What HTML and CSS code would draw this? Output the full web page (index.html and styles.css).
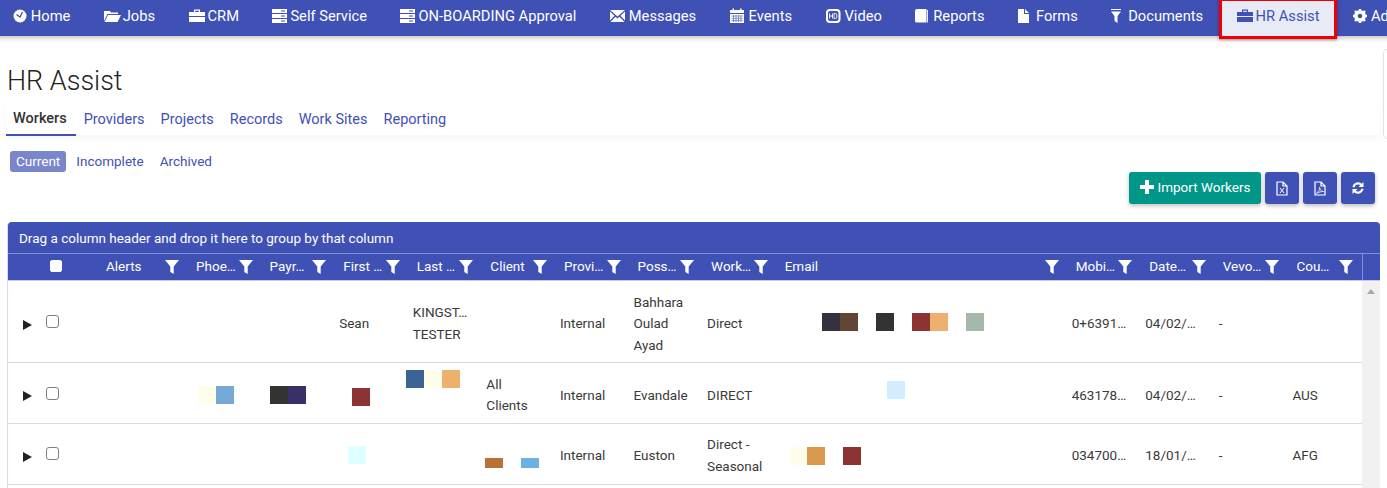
FILE: index.html
```html
<!DOCTYPE html>
<html lang="en">
<head>
<meta charset="utf-8">
<title>HR Assist</title>
<link rel="stylesheet" href="styles.css">
</head>
<body>
<nav class="nav">
  <a class="nav-item"><svg width="18" height="16" viewBox="0 0 18 16"><circle cx="7" cy="8" r="6.500" fill="#fff"/><path d="M3.500 6.500l3.500 2.500 2.500-5" fill="none" stroke="#3f51b5" stroke-width="1.300"/></svg>Home</a>
  <a class="nav-item"><svg width="19" height="16" viewBox="0 0 19 16"><path d="M0 3h6l1 1.500h7V6H3.500L0 13zM4 7h13l-3.500 7H0.500z" fill="#fff"/></svg>Jobs</a>
  <a class="nav-item"><svg width="19" height="16" viewBox="0 0 19 16"><path d="M5 4V1.500h6V4H9.800V2.700H6.200V4zM0 4h16v4H0zM0 9h16v5H0z" fill="#fff"/></svg>CRM</a>
  <a class="nav-item"><svg width="18" height="16" viewBox="0 0 18 16"><path d="M0 1h15v4H0zM0 6h15v4H0zM0 11h15v4H0z" fill="#fff"/><path d="M9 3h4M9 8h4M9 13h4" stroke="#3f51b5"/></svg>Self Service</a>
  <a class="nav-item"><svg width="18" height="16" viewBox="0 0 18 16"><path d="M0 1h15v4H0zM0 6h15v4H0zM0 11h15v4H0z" fill="#fff"/><path d="M9 3h4M9 8h4M9 13h4" stroke="#3f51b5"/></svg>ON-BOARDING Approval</a>
  <a class="nav-item"><svg width="19" height="16" viewBox="0 0 19 16"><path d="M0 2h15L7.500 8.500zM0 3.500l4.500 4.300L0 12.500zM15 3.500v9l-4.500-4.700zM5.500 8.800l2 1.800 2-1.800 5 5.200H.5z" fill="#fff"/></svg>Messages</a>
  <a class="nav-item"><svg width="19" height="16" viewBox="0 0 19 16"><path d="M0 2h2.500V0.500H4V2h6V0.500h1.500V2H14v3H0z" fill="#fff"/><path d="M0 6h14v9H0z" fill="#fff"/><path d="M1.500 8h11M1.500 10.300h11M1.500 12.600h11M3.500 7v7M6 7v7M8.500 7v7M11 7v7" stroke="#5c6bc0" stroke-width=".7"/></svg>Events</a>
  <a class="nav-item"><svg width="19" height="16" viewBox="0 0 19 16"><rect x="1" y="2" width="12.500" height="12" rx="3" fill="#3f51b5" stroke="#fff" stroke-width="2"/><path d="M3.500 5.500v5M6.500 5.500v5M3.500 8h3M8 5.500v5h1.500a1.500 2.500 0 0 0 0-5z" fill="none" stroke="#fff" stroke-width=".9"/></svg>Video</a>
  <a class="nav-item"><svg width="18" height="16" viewBox="0 0 18 16"><path d="M0 3Q0 1 2 1h9.500v13.500H2q-2 0-2-1.500z" fill="#fff"/><path d="M12.500 2v12.500" stroke="#fff" stroke-width=".9"/></svg>Reports</a>
  <a class="nav-item"><svg width="18" height="16" viewBox="0 0 18 16"><path d="M0 1h6v5h5v9H0zM7 1l4 4H7z" fill="#fff"/></svg>Forms</a>
  <a class="nav-item"><svg width="17" height="16" viewBox="0 0 17 16"><path d="M0 1h10v1H0zM0 3.500h10L6.500 8v7L3.500 13V8z" fill="#fff"/></svg>Documents</a>
  <a class="nav-item active"><svg width="19" height="16" viewBox="0 0 19 16"><path d="M5 4V1.500h6V4H9.800V2.700H6.200V4zM0 4h16v4H0zM0 9h16v5H0z" fill="#3f51b5"/></svg>HR Assist</a>
  <a class="nav-item"><svg width="18" height="16" viewBox="0 0 18 16"><circle cx="7" cy="8" r="4.500" fill="none" stroke="#fff" stroke-width="3"/><path d="M7 1v14M0 8h14M2 3l10 10M12 3L2 13" stroke="#fff" stroke-width="2.400"/><circle cx="7" cy="8" r="2.300" fill="#3f51b5"/></svg>Admin</a>
</nav>

<main class="page">
  <h1 class="title">HR Assist</h1>
  <div class="side-tab"></div>
  <div class="tabs">
    <a class="tab current">Workers</a>
    <a class="tab">Providers</a>
    <a class="tab">Projects</a>
    <a class="tab">Records</a>
    <a class="tab">Work Sites</a>
    <a class="tab">Reporting</a>
  </div>
  <div class="pills">
    <a class="pill on">Current</a>
    <a class="pill">Incomplete</a>
    <a class="pill">Archived</a>
  </div>
  <div class="actions">
    <button class="btn teal"><svg width="14" height="14" viewBox="0 0 14 14"><path d="M5 0h4v5h5v4H9v5H5V9H0V5h5z" fill="#fff"/></svg>Import Workers</button>
    <button class="btn icon"><svg width="12" height="15" viewBox="0 0 12 15"><path d="M1 1h6l4 4v9H1zM7 1v4h4" fill="none" stroke="#fff" stroke-width="1.200"/><path d="M4 7l4 5M8 7l-4 5" stroke="#fff"/></svg></button>
    <button class="btn icon"><svg width="12" height="15" viewBox="0 0 12 15"><path d="M1 1h6l4 4v9H1zM7 1v4h4" fill="none" stroke="#fff" stroke-width="1.200"/><path d="M2.500 12.500C5 10 6 8 5.500 6.500 7 10 8 10.500 9.500 10.500 7 10.500 5 11 2.500 12.500z" fill="none" stroke="#fff" stroke-width=".8"/></svg></button>
    <button class="btn icon"><svg width="12" height="12" viewBox="0 0 12 12"><path d="M1.500 5.200A4.600 4.600 0 0 1 9.500 3M10.500 6.800A4.600 4.600 0 0 1 2.500 9" fill="none" stroke="#fff" stroke-width="2"/><path d="M11.500 0v5h-5zM.5 12V7h5z" fill="#fff"/></svg></button>
  </div>

  <section class="grid">
    <div class="group-bar">Drag a column header and drop it here to group by that column</div>
    <div class="row head">
      <div></div>
      <div class="hcheck"><input type="checkbox" class="check white"></div>
      <div class="hcell alerts">Alerts<svg class="funnel" viewBox="0 0 14 14"><path d="M0 0h14L8.700 6.500V14L5.300 12V6.500z"/></svg></div>
      <div class="hcell">Phoe…<svg class="funnel" viewBox="0 0 14 14"><path d="M0 0h14L8.700 6.500V14L5.300 12V6.500z"/></svg></div>
      <div class="hcell">Payr…<svg class="funnel" viewBox="0 0 14 14"><path d="M0 0h14L8.700 6.500V14L5.300 12V6.500z"/></svg></div>
      <div class="hcell">First …<svg class="funnel" viewBox="0 0 14 14"><path d="M0 0h14L8.700 6.500V14L5.300 12V6.500z"/></svg></div>
      <div class="hcell">Last …<svg class="funnel" viewBox="0 0 14 14"><path d="M0 0h14L8.700 6.500V14L5.300 12V6.500z"/></svg></div>
      <div class="hcell">Client<svg class="funnel" viewBox="0 0 14 14"><path d="M0 0h14L8.700 6.500V14L5.300 12V6.500z"/></svg></div>
      <div class="hcell">Provi…<svg class="funnel" viewBox="0 0 14 14"><path d="M0 0h14L8.700 6.500V14L5.300 12V6.500z"/></svg></div>
      <div class="hcell">Poss…<svg class="funnel" viewBox="0 0 14 14"><path d="M0 0h14L8.700 6.500V14L5.300 12V6.500z"/></svg></div>
      <div class="hcell">Work…<svg class="funnel" viewBox="0 0 14 14"><path d="M0 0h14L8.700 6.500V14L5.300 12V6.500z"/></svg></div>
      <div class="hcell">Email<svg class="funnel" viewBox="0 0 14 14"><path d="M0 0h14L8.700 6.500V14L5.300 12V6.500z"/></svg></div>
      <div class="hcell">Mobi…<svg class="funnel" viewBox="0 0 14 14"><path d="M0 0h14L8.700 6.500V14L5.300 12V6.500z"/></svg></div>
      <div class="hcell">Date…<svg class="funnel" viewBox="0 0 14 14"><path d="M0 0h14L8.700 6.500V14L5.300 12V6.500z"/></svg></div>
      <div class="hcell">Vevo…<svg class="funnel" viewBox="0 0 14 14"><path d="M0 0h14L8.700 6.500V14L5.300 12V6.500z"/></svg></div>
      <div class="hcell">Cou…<svg class="funnel" viewBox="0 0 14 14"><path d="M0 0h14L8.700 6.500V14L5.300 12V6.500z"/></svg></div>
      <div class="hend"></div>
    </div>

    <div class="body">
      <div class="rows">
        <div class="row">
          <div class="cell expand"><span class="arrow"></span></div>
          <div class="cell checkcell"><input type="checkbox" class="check"></div>
          <div class="cell"></div>
          <div class="cell"></div>
          <div class="cell"></div>
          <div class="cell">Sean</div>
          <div class="cell">KINGST…<br>TESTER</div>
          <div class="cell"></div>
          <div class="cell">Internal</div>
          <div class="cell">Bahhara<br>Oulad<br>Ayad</div>
          <div class="cell">Direct</div>
          <div class="cell blocks"><div class="swatches r1-email"><i class="sw navy"></i><i class="sw brown"></i><i class="sw dark sp"></i><i class="sw red sp"></i><i class="sw peach"></i><i class="sw sage sp"></i></div></div>
          <div class="cell">0+6391…</div>
          <div class="cell">04/02/…</div>
          <div class="cell">-</div>
          <div class="cell"></div>
        </div>
        <div class="row">
          <div class="cell expand"><span class="arrow"></span></div>
          <div class="cell checkcell"><input type="checkbox" class="check"></div>
          <div class="cell"></div>
          <div class="cell blocks"><div class="swatches r2-phone"><i class="sw cream"></i><i class="sw sky"></i></div></div>
          <div class="cell blocks"><div class="swatches r2-payroll"><i class="sw dark"></i><i class="sw indigo"></i></div></div>
          <div class="cell blocks"><div class="swatches r2-first"><i class="sw red"></i></div></div>
          <div class="cell blocks"><div class="swatches r2-last"><i class="sw steel"></i><i class="sw cream"></i><i class="sw peach"></i></div></div>
          <div class="cell">All<br>Clients</div>
          <div class="cell">Internal</div>
          <div class="cell">Evandale</div>
          <div class="cell">DIRECT</div>
          <div class="cell blocks"><div class="swatches r2-email"><i class="sw ice"></i></div></div>
          <div class="cell">463178…</div>
          <div class="cell">04/02/…</div>
          <div class="cell">-</div>
          <div class="cell">AUS</div>
        </div>
        <div class="row">
          <div class="cell expand"><span class="arrow"></span></div>
          <div class="cell checkcell"><input type="checkbox" class="check"></div>
          <div class="cell"></div>
          <div class="cell"></div>
          <div class="cell"></div>
          <div class="cell blocks"><div class="swatches r3-first"><i class="sw aqua"></i></div></div>
          <div class="cell"></div>
          <div class="cell blocks"><div class="swatches r3-client"><i class="sw short rust"></i><i class="sw short blue sp"></i></div></div>
          <div class="cell">Internal</div>
          <div class="cell">Euston</div>
          <div class="cell">Direct -<br>Seasonal</div>
          <div class="cell blocks"><div class="swatches r3-email"><i class="sw cream"></i><i class="sw amber"></i><i class="sw red sp"></i></div></div>
          <div class="cell">034700…</div>
          <div class="cell">18/01/…</div>
          <div class="cell">-</div>
          <div class="cell">AFG</div>
        </div>
      </div>
      <div class="scrollbar"><span class="scroll-up"></span></div>
    </div>
  </section>
</main>
</body>
</html>
```

FILE: styles.css
```css
* { box-sizing: border-box; }
html, body { height: 100%; overflow: hidden; }
body {
  margin: 0;
  background: #fff;
  color: #333;
  font-family: Roboto, "Liberation Sans", sans-serif;
  font-size: 13.5px;
}

/* top navigation */
.nav {
  display: flex;
  width: max-content;
  min-width: 100%;
  height: 36px;
  margin-left: -4px;
  background: #3f51b5;
  box-shadow: 0 2px 5px rgba(0, 0, 0, .25);
  position: relative;
  z-index: 2;
}
.nav-item {
  display: flex;
  align-items: center;
  padding: 0 16.650px 4px 16.800px;
  color: #fff;
  font-size: 14.7px;
  white-space: nowrap;
}
.nav-item svg { flex: none; }
.nav-item.active {
  position: relative;
  background: #e8eaf6;
  color: #3f51b5;
}
.nav-item.active::after {
  content: "";
  box-sizing: border-box;
  position: absolute;
  left: -1px;
  right: -1px;
  top: -2px;
  height: 41px;
  border: 3px solid #f00000;
  box-shadow: 0 1px 3px rgba(0, 0, 0, .4);
}

/* page */
.page { position: relative; padding: 0 7px; }
.title {
  margin: 0;
  padding-top: 28px;
  height: 67px;
  font-size: 27px;
  line-height: 34px;
  font-weight: 300;
  color: #222;
}
.side-tab {
  position: absolute;
  right: -8px;
  top: 13px;
  width: 12px;
  height: 90px;
  border: 1px solid #dfe2f1;
  border-radius: 4px;
}

.tabs {
  display: flex;
  height: 32px;
  margin-left: -1px;
  box-shadow: 0 4px 7px rgba(0, 0, 0, .035);
}
.tab {
  display: flex;
  align-items: center;
  padding: 0 8px;
  height: 33px;
  font-size: 14.500px;
  color: #3f51b5;
}
.tab.current {
  padding: 0 9px 0 7px;
  color: #333;
  font-weight: 500;
  border-bottom: 2px solid #3f51b5;
}

.pills { display: flex; gap: 4px; margin: 16px 0 0 3px; }
.pill {
  padding: 0 6px;
  line-height: 21px;
  border-radius: 3px;
  color: #3f51b5;
}
.pill.on { background: #7986cb; color: #fff; }

.actions {
  display: flex;
  justify-content: flex-end;
  gap: 4px;
  margin: 0 5px 0 0;
}
.btn {
  display: flex;
  align-items: center;
  justify-content: center;
  height: 32px;
  border: 0;
  border-radius: 3px;
  color: #fff;
  font: 13.5px Roboto, "Liberation Sans", sans-serif;
  box-shadow: 0 2px 4px rgba(0, 0, 0, .25);
}
.btn.teal { width: 132px; gap: 4px; padding: 0 0 2px; background: #009688; }
.btn.icon { width: 34px; background: #3f51b5; }

/* data grid */
.grid {
  margin-top: 18px;
  border-left: 1px solid #d5d9ee;
  border-radius: 4px 4px 0 0;
}
.group-bar {
  height: 32px;
  padding: 1px 11px 0;
  line-height: 30px;
  background: #3f51b5;
  color: #fff;
  border-radius: 4px 4px 0 0;
  border-bottom: 1px solid #8490d4;
}
.row {
  display: grid;
  grid-template-columns: 32px 58px 90px repeat(8, 73.6fr) 291fr repeat(4, 73.6fr);
  border-bottom: 1px solid #d5d9ee;
}
.row.head {
  grid-template-columns: 32px 58px 90px repeat(8, 73.6fr) 291fr repeat(4, 73.6fr) 18px;
  height: 27px;
  background: #3f51b5;
  color: #fff;
  border-bottom: 1px solid #c5cae9;
}
.hcheck { padding: 6px 0 0 10px; }
.hcell {
  display: flex;
  align-items: center;
  justify-content: space-between;
  padding: 0 9px 2px 8px;
  white-space: nowrap;
}
.hend { border-left: 1px solid #8490d4; }
.funnel {
  flex: none;
  width: 14px;
  height: 14px;
  margin-top: 2px;
  fill: #fff;
}

.body { display: flex; height: 210px; overflow: hidden; }
.rows { flex: 1; min-width: 0; }
.scrollbar {
  flex: none;
  width: 18px;
  background: #f1f1f1;
  display: flex;
  justify-content: center;
  padding-top: 8px;
}
.scroll-up {
  width: 0;
  height: 0;
  border: 4px solid transparent;
  border-top: 0;
  border-bottom: 5px solid #a9a9a9;
}

.cell {
  display: flex;
  flex-direction: column;
  justify-content: center;
  padding: 10.500px 4px 6px;
  line-height: 21.6px;
  min-width: 0;
  color: #3a3a3a;
}
.cell.blocks { padding: 8px 4px 8.500px; }
.cell.expand { padding: 0 0 0 15px; }
.cell.checkcell { padding: 0 0 0 6px; }
.arrow {
  width: 0;
  height: 0;
  margin-top: 6px;
  border-left: 9px solid #222;
  border-top: 5.500px solid transparent;
  border-bottom: 5.500px solid transparent;
}
.check {
  appearance: none;
  display: block;
  width: 13px;
  height: 13px;
  margin: 0;
  background: #fff;
  border: 1px solid #808080;
  border-radius: 3px;
}
.check.white { width: 12px; height: 12px; border-color: #fff; border-radius: 2px; }

/* colour blocks inside cells */
.swatches { display: flex; align-self: flex-start; }
.sw { display: block; width: 18px; height: 18px; }
.sw.sp { margin-left: 18px; }
.sw.short { height: 10px; }
.r1-email { margin: 1px 0 0 41px; }
.r2-phone { margin: 4px 0 0 6px; }
.r2-payroll { margin: 4px 0 0 4px; }
.r2-first { margin: 9px 0 0 13px; }
.r2-last { margin: -27px 0 0 -7px; }
.r2-email { margin: -6px 0 0 106px; }
.r3-first { margin: 2px 0 0 9px; }
.r3-client { margin: 18px 0 0 -1px; }
.r3-email { margin: 4px 0 0 8px; }

.navy { background: #33333f; }
.brown { background: #604434; }
.dark { background: #333; }
.red { background: #8c3333; }
.peach { background: #eeb06e; }
.sage { background: #a5b8a9; }
.cream { background: #fffeeb; }
.sky { background: #76a9d8; }
.indigo { background: #39306a; }
.steel { background: #3b6496; }
.ice { background: #d2edff; }
.aqua { background: #dcffff; }
.rust { background: #b87136; }
.blue { background: #6db0e3; }
.amber { background: #d99a4d; }
```
